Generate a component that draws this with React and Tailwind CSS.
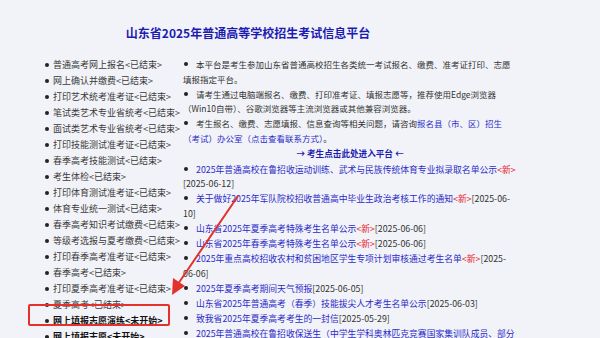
import React from 'react';

// 左侧流程列表
const STEPS = [
  '普通高考网上报名<已结束>',
  '网上确认并缴费<已结束>',
  '打印艺术统考准考证<已结束>',
  '笔试类艺术专业省统考<已结束>',
  '面试类艺术专业省统考<已结束>',
  '打印技能测试准考证<已结束>',
  '春季高考技能测试<已结束>',
  '考生体检<已结束>',
  '打印体育测试准考证<已结束>',
  '体育专业统一测试<已结束>',
  '春季高考知识考试缴费<已结束>',
  '等级考选报与夏考缴费<已结束>',
  '打印春季高考准考证<已结束>',
  '春季高考<已结束>',
  '打印夏季高考准考证<已结束>',
  '夏季高考<已结束>',
];

const NEWS = [
  { title: '2025年普通高校在鲁招收运动训练、武术与民族传统体育专业拟录取名单公示', isNew: true, date: '[2025-06-12]' },
  { title: '关于做好2025年军队院校招收普通高中毕业生政治考核工作的通知', isNew: true, date: '[2025-06-10]' },
  { title: '山东省2025年夏季高考特殊考生名单公示', isNew: true, date: '[2025-06-06]' },
  { title: '山东省2025年春季高考特殊考生名单公示', isNew: true, date: '[2025-06-06]' },
  { title: '2025年重点高校招收农村和贫困地区学生专项计划审核通过考生名单', isNew: true, date: '[2025-06-06]' },
  { title: '2025年夏季高考期间天气预报', isNew: false, date: '[2025-06-05]' },
  { title: '山东省2025年普通高考（春季）技能拔尖人才考生名单公示', isNew: false, date: '[2025-06-03]' },
  { title: '致我省2025年夏季高考考生的一封信', isNew: false, date: '[2025-05-29]' },
  { title: '2025年普通高校在鲁招收保送生（中学生学科奥林匹克竞赛国家集训队成员、部分', isNew: false, date: '' },
];

const font = { fontFamily: '"Noto Sans CJK SC", "Noto Sans", sans-serif' };

function Dot() {
  return <span className="inline-block w-[4px] h-[4px] rounded-full bg-[#222] ml-[1px] mr-[8px] align-[2px]" />;
}

export default function App() {
  return (
    <div className="relative w-[600px] h-[338px] overflow-hidden bg-[#f2f3f8]" style={font}>
      <h1 className="w-[496px] pt-[23px] text-center text-[12px] leading-[20px] font-bold text-[#1c1cb0]">
        山东省2025年普通高等学校招生考试信息平台
      </h1>

      <div className="flex pt-[14px]">
        {/* 左侧 */}
        <ul className="w-[183px] pl-[45px] text-[9px] text-[#3a3a3a]">
          {STEPS.map((s) => (
            <li key={s} className="flex items-center h-[16px] whitespace-nowrap">
              <span className="w-[4px] h-[4px] rounded-full bg-[#222] mr-[4px] shrink-0" />
              {s}
            </li>
          ))}
          {['网上填报志愿演练<未开始>', '网上填报志愿<未开始>'].map((s) => (
            <li key={s} className="flex items-center h-[16px] whitespace-nowrap font-bold text-[#111]">
              <span className="w-[4px] h-[4px] rounded-full bg-[#222] mr-[4px] shrink-0" />
              {s}
            </li>
          ))}
        </ul>

        {/* 右侧 */}
        <div className="w-[334px] text-[#333]">
          <div className="text-[8.5px] leading-[14.8px]">
            <p>
              <Dot />本平台是考生参加山东省普通高校招生各类统一考试报名、缴费、准考证打印、志愿填报指定平台。
            </p>
            <p>
              <Dot />请考生通过电脑端报名、缴费、打印准考证、填报志愿等，推荐使用Edge浏览器（Win10自带）、谷歌浏览器等主流浏览器或其他兼容浏览器。
            </p>
            <p>
              <Dot />考生报名、缴费、志愿填报、信息查询等相关问题，请咨询
              <span className="text-[#2b2bc8]">报名县（市、区）招生（考试）办公室（点击查看联系方式）</span>。
            </p>
          </div>

          <p className="text-center text-[8.6px] font-bold text-[#1c1cb0] leading-[14.8px]">→ 考生点击此处进入平台 ←</p>

          <ul className="mt-[2px] text-[8.8px]">
            {NEWS.map((n) => (
              <li key={n.title} className="leading-[14.9px]">
                <Dot />
                <span className="text-[#2b2bc8]">{n.title}</span>
                {n.isNew && <span className="text-[#e8202a]">&lt;新&gt;</span>}
                {n.date}
              </li>
            ))}
          </ul>
        </div>
      </div>

      {/* 标注框 */}
      <div className="absolute left-[28px] top-[304px] w-[142px] h-[22px] border-2 border-[#e3312b] rounded-[2px]" />

      {/* 标注箭头 */}
      <svg className="absolute left-0 top-0" width="600" height="338" viewBox="0 0 600 338">
        <line x1="238" y1="196" x2="178" y2="284" stroke="#e3312b" strokeWidth="2" />
        <polygon points="172,295 173,278 185,286" fill="#e3312b" />
      </svg>
    </div>
  );
}
